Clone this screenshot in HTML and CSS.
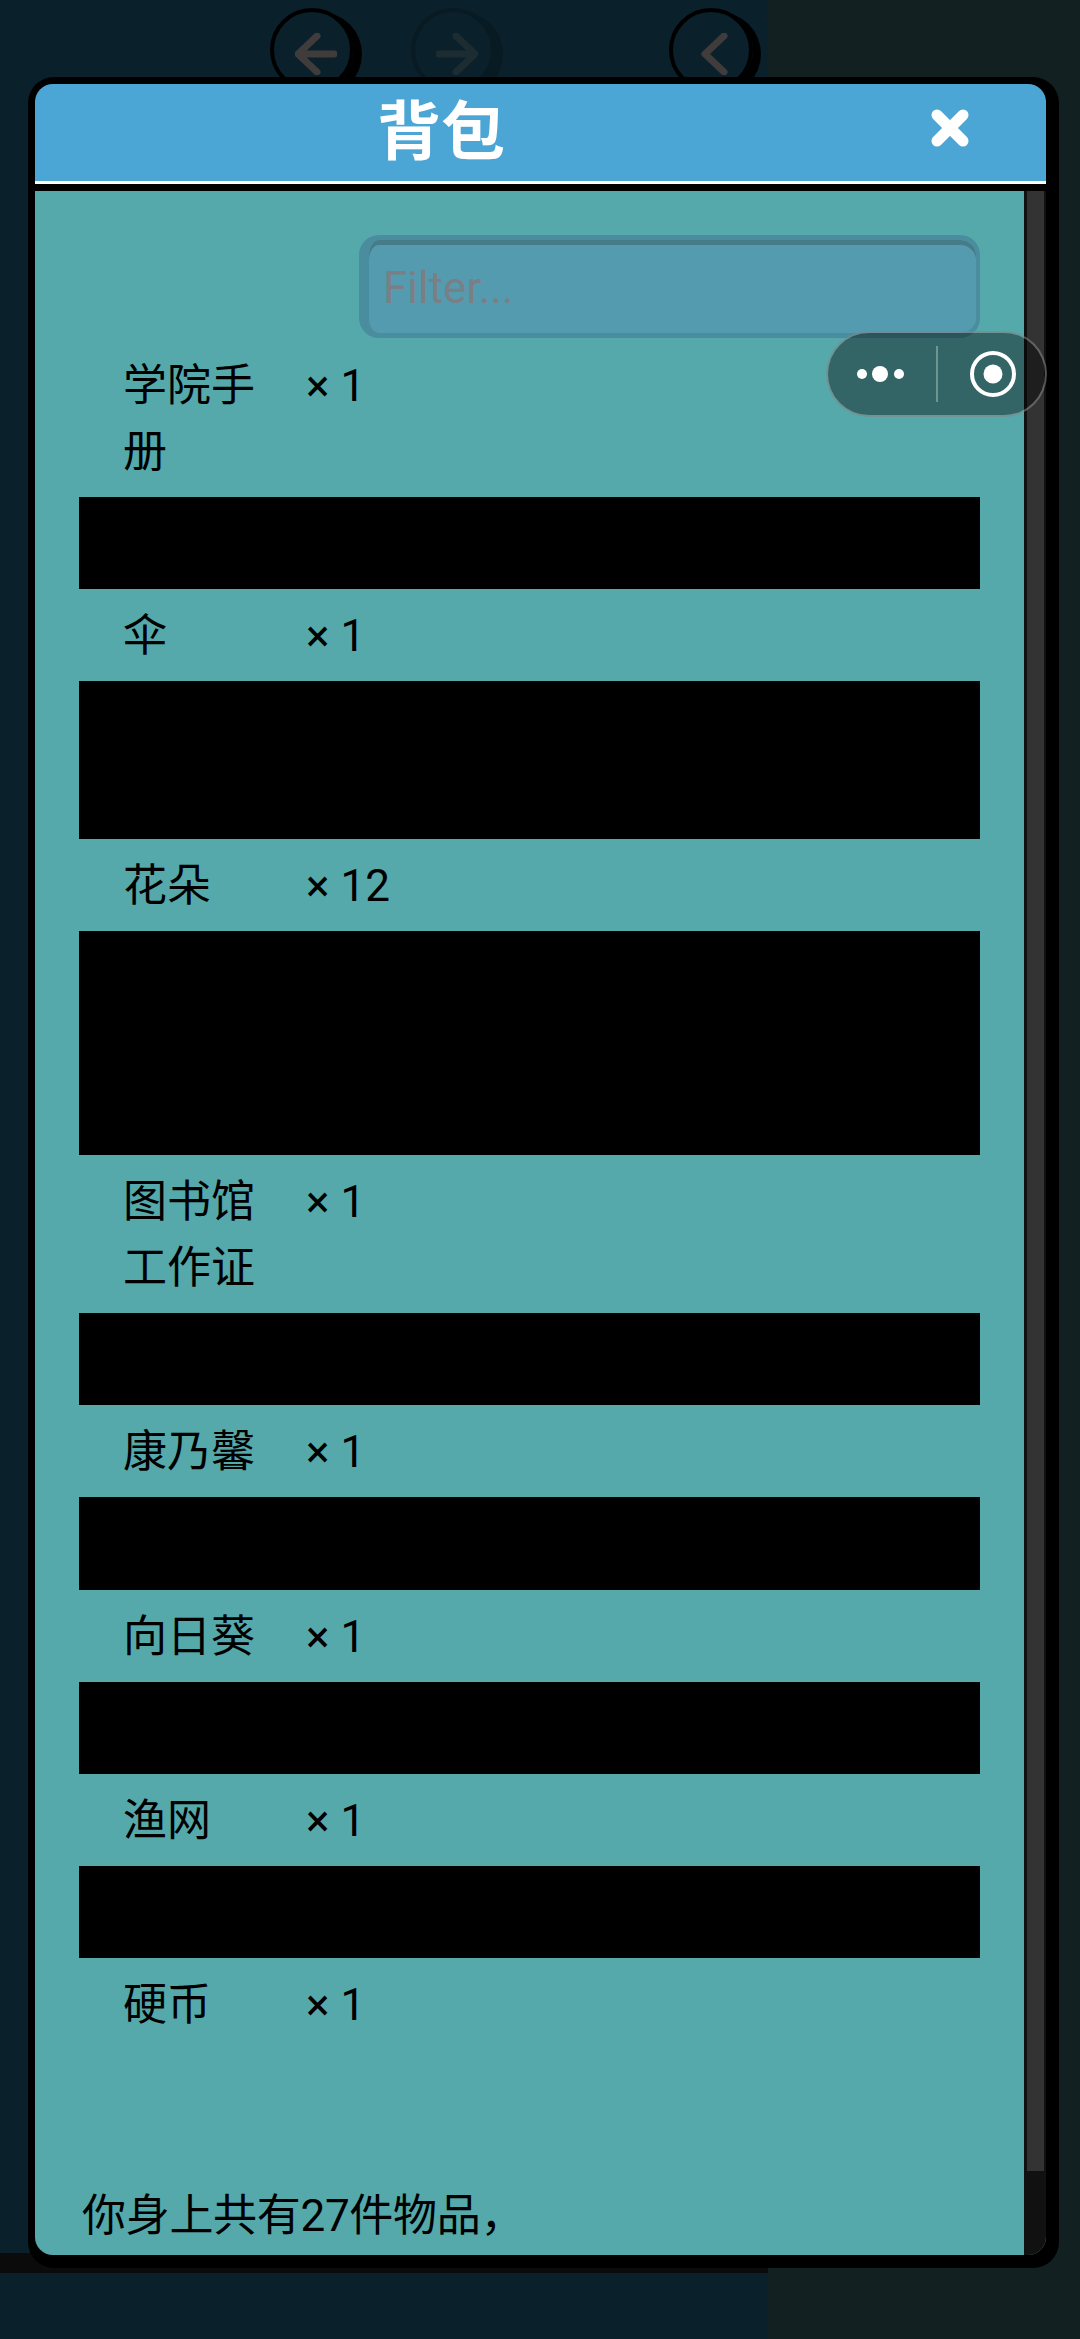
FILE: index.html
```html
<!DOCTYPE html>
<html lang="zh-CN">
<head>
  <meta charset="UTF-8" />
  <meta name="viewport" content="width=device-width, initial-scale=1.0"/>
  <title>背包</title>
  <link rel="stylesheet" href="styles.css">
</head>
<body>
  <div class="page">
    <nav class="history">
      <span class="round-btn">
        <svg viewBox="0 0 42 42"><path d="M22 3 3 21l19 18M4 21h35"/></svg>
      </span>
      <span class="round-btn faded">
        <svg viewBox="0 0 42 42"><path d="M20 3l19 18-19 18M38 21H3"/></svg>
      </span>
      <span class="round-btn collapse">
        <svg viewBox="0 0 42 42"><path d="M30 3 11 21l19 18"/></svg>
      </span>
    </nav>
    <div class="under-bar"></div>
  </div>

  <section class="modal">
    <header class="modal-head">
      <h1>背包</h1>
      <svg class="close" viewBox="0 0 40 38"><path d="M7 6l26 26M33 6 7 32"/></svg>
    </header>
    <div class="modal-body">
      <div class="inventory">
        <input class="filter" type="text" placeholder="Filter...">

        <div class="item"><span class="name">学院手册</span><span class="qty">× 1</span></div>
        <div class="redact"></div>
        <div class="item"><span class="name">伞</span><span class="qty">× 1</span></div>
        <div class="redact two"></div>
        <div class="item"><span class="name">花朵</span><span class="qty">× 12</span></div>
        <div class="redact three"></div>
        <div class="item"><span class="name">图书馆工作证</span><span class="qty">× 1</span></div>
        <div class="redact"></div>
        <div class="item"><span class="name">康乃馨</span><span class="qty">× 1</span></div>
        <div class="redact"></div>
        <div class="item"><span class="name">向日葵</span><span class="qty">× 1</span></div>
        <div class="redact"></div>
        <div class="item"><span class="name">渔网</span><span class="qty">× 1</span></div>
        <div class="redact"></div>
        <div class="item"><span class="name">硬币</span><span class="qty">× 1</span></div>

        <p class="summary">你身上共有27件物品，</p>
      </div>
      <div class="scrollbar"><div class="thumb"></div></div>
    </div>
  </section>

  <div class="capsule">
    <svg class="dots" viewBox="0 0 48 20"><circle cx="5" cy="10" r="5"/><circle cx="23" cy="10" r="8"/><circle cx="42" cy="10" r="5"/></svg>
    <span class="divider"></span>
    <svg class="target" viewBox="0 0 48 48"><circle class="ring" cx="24" cy="24" r="21"/><circle cx="24" cy="24" r="9.5"/></svg>
  </div>
</body>
</html>
```

FILE: styles.css
```css
* {
  box-sizing: border-box;
}
body {
  margin: 0;
  height: 2339px;
  overflow: hidden;
  position: relative;
  font-family: Roboto, "Noto Sans CJK SC", sans-serif;
  background: #122022;
  color: #000;
}

/* page behind the popup */
.page {
  width: 768px;
  height: 100%;
  background: #0a202b;
  display: flex;
  flex-direction: column;
}
.history {
  display: flex;
  gap: 57px;
  padding: 8px 0 0 270px;
}
.round-btn {
  width: 84px;
  height: 84px;
  padding: 8px 0 0 8px;
  border: 4px solid #000;
  border-radius: 50%;
  box-shadow: 8px 4px 0 #000;
  display: flex;
  align-items: center;
  justify-content: center;
}
.round-btn svg {
  width: 42px;
  height: 42px;
  fill: none;
  stroke: #413c3c;
  stroke-width: 7;
  stroke-linecap: round;
  stroke-linejoin: round;
}
.round-btn.faded {
  border-color: #081a22;
  box-shadow: 8px 4px 0 #081a22;
}
.round-btn.faded svg {
  stroke: #1d2c31;
}
.round-btn.collapse {
  margin-left: 117px;
}
.under-bar {
  margin-top: auto;
  margin-bottom: 66px;
  width: 768px;
  height: 20px;
  background: #0b0b0b;
}

/* popup */
.modal {
  position: absolute;
  left: 28px;
  top: 77px;
  width: 1031px;
  height: 2191px;
  padding: 7px 13px 13px 7px;
  background: #000;
  border-radius: 26px;
  display: flex;
  flex-direction: column;
}
.modal-head {
  height: 97px;
  flex: none;
  background: #4ca6d5;
  border-radius: 18px 18px 0 0;
  position: relative;
  padding-left: 342px;
  box-shadow: 0 3px 0 #fff;
}
.modal-head h1 {
  margin: 0;
  font-size: 64px;
  font-weight: 700;
  line-height: 98px;
  color: #fff;
}
.close {
  position: absolute;
  left: 895px;
  top: 25px;
  width: 40px;
  height: 38px;
  fill: none;
  stroke: #fff;
  stroke-width: 11;
  stroke-linecap: round;
}
.modal-body {
  flex: 1;
  min-height: 0;
  margin-top: 10px;
  display: flex;
  background: #55a9ab;
  border-radius: 0 0 18px 18px;
  overflow: hidden;
}
.inventory {
  flex: 1;
  padding: 44px 44px 0;
  display: flex;
  flex-direction: column;
  font-size: 44px;
  line-height: 66px;
}
.filter {
  flex: none;
  align-self: flex-end;
  width: 621px;
  height: 103px;
  padding: 2px 0 0 14px;
  margin: 0 0 1px;
  font: inherit;
  color: #000;
  background: #559bb0;
  border: solid #4a8d9e;
  border-width: 5px 4px 5px 10px;
  border-radius: 20px;
  outline: 0;
  box-shadow: inset 0 5px 0 #467b88;
}
.filter::placeholder {
  color: #7a7f85;
  opacity: 1;
}
.item {
  display: flex;
  align-items: flex-start;
  padding: 14px 0 12px 44px;
}
.name {
  width: 135px;
  margin-right: 48px;
  flex: none;
}
.qty {
  white-space: nowrap;
}
.redact {
  height: 92.4px;
  flex: none;
  background: #000;
}
.redact.two {
  height: 158px;
}
.redact.three {
  height: 223.4px;
}
.summary {
  margin: auto 0 0;
  padding: 0 0 6px 3px;
  letter-spacing: -0.3px;
}
.scrollbar {
  width: 22px;
  flex: none;
  padding: 0 2px 0 3px;
  background: #111;
}
.thumb {
  height: 1980px;
  background: #333;
}

/* wechat capsule */
.capsule {
  position: absolute;
  left: 826px;
  top: 331px;
  width: 221px;
  height: 86px;
  background: rgba(0, 0, 0, 0.4);
  border: 2px solid rgba(255, 255, 255, 0.3);
  border-radius: 43px;
  display: flex;
  align-items: center;
  padding-left: 29px;
}
.dots {
  width: 48px;
  height: 20px;
  fill: #fff;
}
.divider {
  width: 2px;
  height: 56px;
  margin: 0 31px 0 31px;
  background: rgba(255, 255, 255, 0.3);
}
.target {
  width: 48px;
  height: 48px;
  fill: #fff;
}
.target .ring {
  fill: none;
  stroke: #fff;
  stroke-width: 4;
}
```
